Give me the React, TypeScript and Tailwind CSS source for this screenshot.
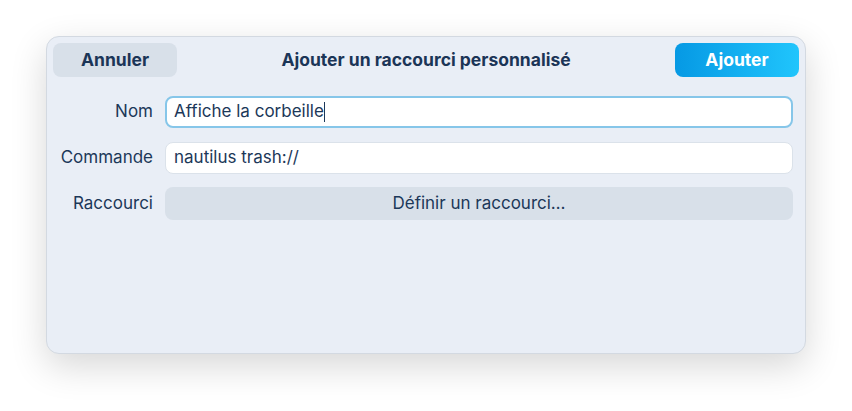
import { useState } from "react";

const App = () => {
  const [command, setCommand] = useState("nautilus trash://");

  return (
    <div
      className="w-[852px] h-[411px] bg-white pt-[36px] pl-[46px]"
      style={{ fontFamily: "Inter, 'Noto Sans', sans-serif" }}
    >
      <div className="w-[760px] h-[318px] rounded-[13px] bg-[#e9eef6] border border-[#d3d9e1] shadow-[0_12px_36px_rgba(0,0,0,0.16)] flex flex-col">
        {/* Header */}
        <div className="flex items-center justify-between pt-[6px] px-[6px]">
          <button className="w-[124px] h-[34px] rounded-lg bg-[#d8e0e9] text-[#1b3557] text-[17.5px] font-bold">
            Annuler
          </button>
          <h1 className="text-[17.5px] font-bold text-[#1b3557]">Ajouter un raccourci personnalisé</h1>
          <button className="w-[124px] h-[34px] rounded-lg bg-gradient-to-r from-[#0699e4] to-[#20c5fc] text-white text-[17.5px] font-bold">
            Ajouter
          </button>
        </div>

        {/* Form */}
        <div className="grid grid-cols-[100px_1fr] gap-x-3 gap-y-[14px] items-center mt-[19px] ml-[6px] mr-[12px] text-[17px] text-[#1c3859]">
          <label className="text-right">Nom</label>
          <div className="h-[32px] rounded-lg bg-white border-2 border-[#86c6e9] flex items-center px-[7px]">
            <span>Affiche la corbeille</span>
            <span className="w-px h-[20px] bg-[#1c3859]" />
          </div>

          <label className="text-right">Commande</label>
          <div className="h-[32px] rounded-lg bg-white border border-[#dbe2ea] flex items-center px-[8px]">
            <input
              value={command}
              onChange={(e) => setCommand(e.target.value)}
              className="w-full bg-transparent outline-none text-[#1c3859]"
            />
          </div>

          <label className="text-right -mt-px">Raccourci</label>
          <button className="h-[33px] -mt-px rounded-lg bg-[#d8e0e9] text-[#1c3859]">
            Définir un raccourci…
          </button>
        </div>
      </div>
    </div>
  );
};

export default App;
